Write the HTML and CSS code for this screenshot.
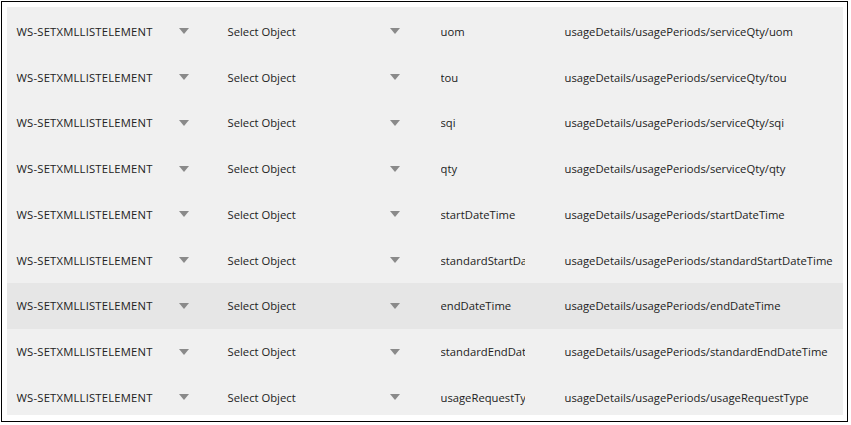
FILE: index.html
```html
<!DOCTYPE html>
<html>
<head>
<meta charset="utf-8">
<link rel="stylesheet" href="styles.css">
</head>
<body>
<div class="frame">
  <div class="panel">
    <div class="row"><span class="c1">WS-SETXMLLISTELEMENT</span><span class="arrow"></span><span class="c2">Select Object</span><span class="arrow"></span><span class="c3">uom</span><span class="c4">usageDetails/usagePeriods/serviceQty/uom</span></div>
    <div class="row"><span class="c1">WS-SETXMLLISTELEMENT</span><span class="arrow"></span><span class="c2">Select Object</span><span class="arrow"></span><span class="c3">tou</span><span class="c4">usageDetails/usagePeriods/serviceQty/tou</span></div>
    <div class="row"><span class="c1">WS-SETXMLLISTELEMENT</span><span class="arrow"></span><span class="c2">Select Object</span><span class="arrow"></span><span class="c3">sqi</span><span class="c4">usageDetails/usagePeriods/serviceQty/sqi</span></div>
    <div class="row"><span class="c1">WS-SETXMLLISTELEMENT</span><span class="arrow"></span><span class="c2">Select Object</span><span class="arrow"></span><span class="c3">qty</span><span class="c4">usageDetails/usagePeriods/serviceQty/qty</span></div>
    <div class="row"><span class="c1">WS-SETXMLLISTELEMENT</span><span class="arrow"></span><span class="c2">Select Object</span><span class="arrow"></span><span class="c3">startDateTime</span><span class="c4">usageDetails/usagePeriods/startDateTime</span></div>
    <div class="row"><span class="c1">WS-SETXMLLISTELEMENT</span><span class="arrow"></span><span class="c2">Select Object</span><span class="arrow"></span><span class="c3">standardStartDateTime</span><span class="c4">usageDetails/usagePeriods/standardStartDateTime</span></div>
    <div class="row active"><span class="c1">WS-SETXMLLISTELEMENT</span><span class="arrow"></span><span class="c2">Select Object</span><span class="arrow"></span><span class="c3">endDateTime</span><span class="c4">usageDetails/usagePeriods/endDateTime</span></div>
    <div class="row"><span class="c1">WS-SETXMLLISTELEMENT</span><span class="arrow"></span><span class="c2">Select Object</span><span class="arrow"></span><span class="c3">standardEndDateTime</span><span class="c4">usageDetails/usagePeriods/standardEndDateTime</span></div>
    <div class="row"><span class="c1">WS-SETXMLLISTELEMENT</span><span class="arrow"></span><span class="c2">Select Object</span><span class="arrow"></span><span class="c3">usageRequestType</span><span class="c4">usageDetails/usagePeriods/usageRequestType</span></div>
  </div>
</div>
</body>
</html>
```
FILE: styles.css
```css
html, body {
  margin: 0;
  padding: 0;
  background: #fff;
}
body {
  font-family: "Open Sans", "Noto Sans", sans-serif;
  font-size: 11.25px;
  color: #222;
}
.frame {
  margin: 1px 0 0 1px;
  width: 847px;
  height: 421px;
  box-sizing: border-box;
  border: 1.5px solid #000;
  padding: 4.5px;
  background: #fff;
}
.panel {
  background: #f0f0f0;
  height: 408px;
  padding-top: 2px;
  box-sizing: border-box;
}
.row {
  height: 45.75px;
  display: grid;
  grid-template-columns: 162px 49px 162px 51px 124px 1fr;
  align-items: center;
  padding-left: 10px;
  white-space: nowrap;
}
.row.active {
  background: #e6e6e6;
}
.c1 {
  letter-spacing: 0.2px;
}
.c3 {
  width: 84px;
  overflow: hidden;
}
.arrow {
  width: 0;
  height: 0;
  border-left: 5px solid transparent;
  border-right: 5px solid transparent;
  border-top: 6px solid #8a8a8a;
  margin-top: 0;
}
```
